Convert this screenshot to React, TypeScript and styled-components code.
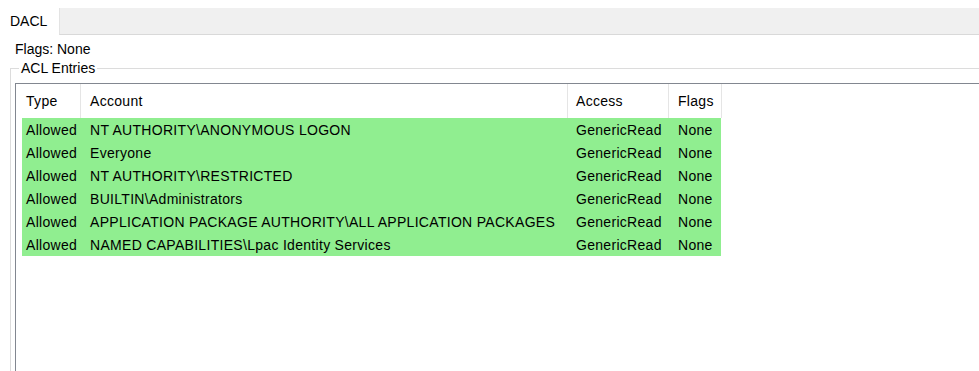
import styled, { createGlobalStyle } from "styled-components";

const GlobalStyle = createGlobalStyle`
  html, body {
    margin: 0;
    padding: 0;
    overflow: hidden;
    background: #ffffff;
  }
  body {
    font-family: "Liberation Sans", Arial, sans-serif;
    font-size: 14px;
    color: #000000;
  }
`;

const Page = styled.div`
  width: 1000px;
  height: 371px;
  padding-top: 8px;
  box-sizing: border-box;
  overflow: hidden;
`;

const TabStrip = styled.div`
  display: flex;
  height: 27px;
`;

const Tab = styled.div`
  width: 59px;
  padding-left: 10px;
  box-sizing: border-box;
  line-height: 26px;
  background: #ffffff;
`;

const TabFiller = styled.div`
  flex: 1;
  background: #f0f0f0;
  border-left: 1px solid #e3e3e3;
  border-bottom: 1px solid #d9d9d9;
`;

const FlagsLabel = styled.div`
  margin: 6px 0 0 15px;
  line-height: 16px;
`;

const GroupBox = styled.fieldset`
  margin: 3px 0 0 10px;
  padding: 7px 0 0 4px;
  border: 1px solid #dcdcdc;
  border-right: none;
  border-bottom: none;
  min-width: 0;
`;

const Legend = styled.legend`
  margin-left: 4px;
  padding: 0 2px;
  line-height: 16px;
`;

const ListView = styled.div`
  height: 310px;
  border: 1px solid #828790;
  border-right: none;
  border-bottom: none;
  background: #ffffff;
  letter-spacing: 0.3px;
`;

// column widths from the left edge of the list, separators included
const COLS = [65, 487, 101, 53];

const HeaderRow = styled.div`
  display: flex;
  height: 34px;
`;

const HeaderCell = styled.div<{ $w: number; $pad: number }>`
  width: ${(p) => p.$w}px;
  padding: 9px 0 0 ${(p) => p.$pad}px;
  box-sizing: border-box;
  line-height: 16px;
  border-right: 1px solid #e5e5e5;
  white-space: nowrap;
`;

const Rows = styled.div`
  margin-left: 6px;
  display: flex;
  flex-direction: column;
`;

const Row = styled.div`
  display: flex;
  height: 23px;
  width: 699px;
  background: #90ee90;
`;

const Cell = styled.div<{ $w: number; $pad: number }>`
  width: ${(p) => p.$w}px;
  padding: 1px 0 0 ${(p) => p.$pad}px;
  box-sizing: border-box;
  line-height: 22px;
  white-space: nowrap;
`;

const headers = [
  { label: "Type", pad: 10 },
  { label: "Account", pad: 9 },
  { label: "Access", pad: 8 },
  { label: "Flags", pad: 9 },
];

const entries = [
  "NT AUTHORITY\\ANONYMOUS LOGON",
  "Everyone",
  "NT AUTHORITY\\RESTRICTED",
  "BUILTIN\\Administrators",
  "APPLICATION PACKAGE AUTHORITY\\ALL APPLICATION PACKAGES",
  "NAMED CAPABILITIES\\Lpac Identity Services",
];

export default function App() {
  return (
    <>
      <GlobalStyle />
      <Page>
        <TabStrip>
          <Tab>DACL</Tab>
          <TabFiller />
        </TabStrip>
        <FlagsLabel>Flags: None</FlagsLabel>
        <GroupBox>
          <Legend>ACL Entries</Legend>
          <ListView>
            <HeaderRow>
              {headers.map((h, i) => (
                <HeaderCell key={h.label} $w={COLS[i]} $pad={h.pad}>
                  {h.label}
                </HeaderCell>
              ))}
            </HeaderRow>
            <Rows>
              {entries.map((account) => (
                <Row key={account}>
                  <Cell $w={59} $pad={4}>Allowed</Cell>
                  <Cell $w={COLS[1]} $pad={9}>{account}</Cell>
                  <Cell $w={COLS[2]} $pad={8}>GenericRead</Cell>
                  <Cell $w={52} $pad={9}>None</Cell>
                </Row>
              ))}
            </Rows>
          </ListView>
        </GroupBox>
      </Page>
    </>
  );
}
